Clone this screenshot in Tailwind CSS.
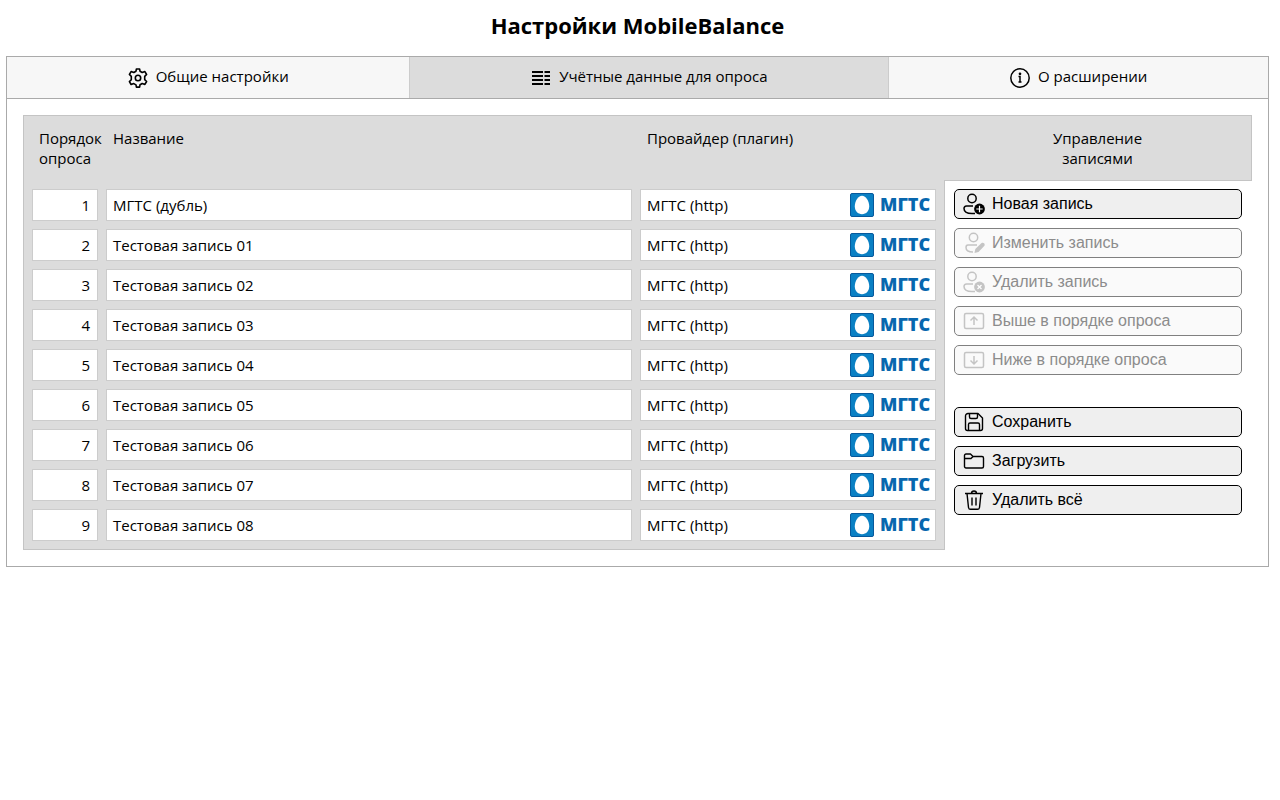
<!DOCTYPE html>
<html lang="ru">
<head>
    <meta charset="UTF-8">
    <meta name="viewport" content="width=device-width, initial-scale=1.0">
    <title>Настройки MobileBalance</title>
    <script src="https://cdn.jsdelivr.net/npm/@tailwindcss/browser@4"></script>
</head>

<body class="bg-white text-black font-['Open_Sans','Noto_Sans',sans-serif] text-[15px] leading-5 pl-1.5 pr-[11px]">
    <h1 class="h-14 pt-[9px] text-center text-[22px] leading-8 font-bold">Настройки MobileBalance</h1>

    <main class="border border-[#aaa]">
        <!-- Tabs -->
        <div role="tablist" class="flex h-[42px] border-b border-[#aaa] bg-[#f7f7f7]">
            <button type="button" role="tab" aria-selected="false" class="flex flex-auto items-center justify-center gap-2">
                <svg class="size-5" viewBox="0 0 20 20" fill="none" stroke="currentColor" stroke-width="1.6" stroke-linejoin="round">
                    <path d="M8 3.2 8.4 1h3.2l.4 2.2 2.2 1.3 2.7-.9 1.7 2.9-1.9 1.9v3.2l1.9 1.9-1.7 2.9-2.7-.9-2.2 1.3-.4 2.3H8.4L8 16.9l-2.2-1.3-2.7.9-1.7-2.9 1.9-1.9V8.4L1.4 6.5l1.7-2.9 2.7.9z"/>
                    <circle cx="10" cy="10" r="2.7"/>
                </svg>
                <span class="pb-[3px]">Общие настройки</span>
            </button>
            <button type="button" role="tab" aria-selected="true" class="flex flex-auto items-center justify-center gap-2 border-x border-[#ccc] bg-[#dcdcdc]">
                <svg class="size-5" viewBox="0 0 20 20" fill="currentColor">
                    <path d="M1 3h11v2H1zM1 7h11v2H1zM1 11h11v2H1zM1 15h11v2H1zM13.500 3h5.500v2h-5.500zM13.500 7h5.500v2h-5.500zM13.500 11h5.500v2h-5.500zM13.500 15h5.500v2h-5.500z"/>
                </svg>
                <span class="pb-[3px]">Учётные данные для опроса</span>
            </button>
            <button type="button" role="tab" aria-selected="false" class="flex flex-auto items-center justify-center gap-2">
                <svg class="size-5" viewBox="0 0 20 20" fill="none" stroke="currentColor" stroke-width="1.5">
                    <circle cx="10" cy="10" r="9.2"/>
                    <path d="M8.5 8.5H10V14M8.5 14h3"/>
                    <circle cx="10" cy="5.8" r=".6" fill="currentColor"/>
                </svg>
                <span class="pb-[3px]">О расширении</span>
            </button>
        </div>

        <section class="flex p-4">
            <!-- Accounts -->
            <div class="flex-1 border-y border-l border-[#c4c4c4] bg-[#dcdcdc]">
                <table class="w-full table-fixed border-separate border-spacing-2">
                    <colgroup>
                        <col class="w-[66px]">
                        <col>
                        <col class="w-[296px]">
                    </colgroup>
                    <thead>
                        <tr class="h-[57px] text-left align-top">
                            <th scope="col" class="pt-1 pl-[7px] font-normal">Порядок опроса</th>
                            <th scope="col" class="pt-1 pl-[7px] font-normal">Название</th>
                            <th scope="col" class="pt-1 pl-[7px] font-normal">Провайдер (плагин)</th>
                        </tr>
                    </thead>
                    <tbody id="accounts"></tbody>
                </table>
            </div>

            <!-- Account controls -->
            <div class="flex w-[308px] flex-col">
                <h2 class="h-[66px] border-y border-r border-[#c4c4c4] bg-[#dcdcdc] px-20 pt-3 text-center">Управление записями</h2>
                <div class="flex flex-1 flex-col gap-[9px] border-l border-[#c4c4c4] pt-2 pr-2.5 pl-[9px] font-['Liberation_Sans',Arial,sans-serif] text-base">
                    <button type="button" class="flex h-[30px] items-center gap-[7px] rounded-[5px] border border-black bg-[#efefef] px-2">
                        <svg class="size-[22px]" viewBox="0 0 22 22" fill="none" stroke="currentColor" stroke-width="1.5">
                            <circle cx="9" cy="5.5" r="4.2"/>
                            <path d="M10 13H3.5C1.8 13 1 14 1 15.5 1 18.5 4 20.5 9 20.5h3"/>
                            <circle cx="16.5" cy="16" r="5.4" fill="currentColor" stroke="none"/>
                            <path d="M16.5 12.8v6.4M13.3 16h6.4" stroke="#fff" stroke-width="1.2"/>
                        </svg>
                        <span>Новая запись</span>
                    </button>
                    <button type="button" disabled class="flex h-[30px] items-center gap-[7px] rounded-[5px] border border-[#808080] bg-[#fafafa] px-2 text-[#8c8c8c]">
                        <svg class="size-[22px] text-[#c4c4c4]" viewBox="0 0 22 22" fill="none" stroke="currentColor" stroke-width="1.5">
                            <circle cx="10.5" cy="5.5" r="4.2"/>
                            <path d="M14 13H5c-1.5 0-2 1-2 2.5 0 3 3 4.5 7 4.5"/>
                            <path d="M11.5 21l.8-4 6-5.8c2.2-1.5 4.4.8 2.9 2.9l-5.7 5.9z" fill="currentColor" stroke="none"/>
                        </svg>
                        <span>Изменить запись</span>
                    </button>
                    <button type="button" disabled class="flex h-[30px] items-center gap-[7px] rounded-[5px] border border-[#808080] bg-[#fafafa] px-2 text-[#8c8c8c]">
                        <svg class="size-[22px] text-[#c4c4c4]" viewBox="0 0 22 22" fill="none" stroke="currentColor" stroke-width="1.5">
                            <circle cx="9" cy="5.5" r="4.2"/>
                            <path d="M10 13H3.5C1.8 13 1 14 1 15.5 1 18.5 4 20.5 9 20.5h3"/>
                            <circle cx="16.5" cy="16" r="5.4" fill="currentColor" stroke="none"/>
                            <path d="M14.5 14l4 4M18.5 14l-4 4" stroke="#fff" stroke-width="1.2"/>
                        </svg>
                        <span>Удалить запись</span>
                    </button>
                    <button type="button" disabled class="flex h-[30px] items-center gap-[7px] rounded-[5px] border border-[#808080] bg-[#fafafa] px-2 text-[#8c8c8c]">
                        <svg class="size-[22px] text-[#c4c4c4]" viewBox="0 0 22 22" fill="none" stroke="currentColor" stroke-width="1.5">
                            <rect x="1.5" y="3.5" width="19" height="15" rx="1.5"/>
                            <path d="M11 15V7M7.5 10.5 11 7l3.5 3.5"/>
                        </svg>
                        <span>Выше в порядке опроса</span>
                    </button>
                    <button type="button" disabled class="flex h-[30px] items-center gap-[7px] rounded-[5px] border border-[#808080] bg-[#fafafa] px-2 text-[#8c8c8c]">
                        <svg class="size-[22px] text-[#c4c4c4]" viewBox="0 0 22 22" fill="none" stroke="currentColor" stroke-width="1.5">
                            <rect x="1.5" y="3.5" width="19" height="15" rx="1.5"/>
                            <path d="M11 7v8M7.5 11.5 11 15l3.5-3.5"/>
                        </svg>
                        <span>Ниже в порядке опроса</span>
                    </button>

                    <div class="mt-[23px] flex flex-col gap-[9px]">
                        <button type="button" class="flex h-[30px] items-center gap-[7px] rounded-[5px] border border-black bg-[#efefef] px-2">
                            <svg class="size-[22px]" viewBox="0 0 22 22" fill="none" stroke="currentColor" stroke-width="1.4" stroke-linejoin="round">
                                <path d="M5 2.5h10L19.5 7v10.5a2 2 0 0 1-2 2h-13a2 2 0 0 1-2-2V5A2.5 2.5 0 0 1 5 2.5z"/>
                                <path d="M6.5 2.5V6A1.5 1.5 0 0 0 8 7.5h5A1.5 1.5 0 0 0 14.5 6V2.5M5.5 19.5v-6A1.5 1.5 0 0 1 7 12h8a1.5 1.5 0 0 1 1.5 1.5v6"/>
                            </svg>
                            <span>Сохранить</span>
                        </button>
                        <button type="button" class="flex h-[30px] items-center gap-[7px] rounded-[5px] border border-black bg-[#efefef] px-2">
                            <svg class="size-[22px]" viewBox="0 0 22 22" fill="none" stroke="currentColor" stroke-width="1.4" stroke-linejoin="round">
                                <path d="M1.5 16.5v-11A1.5 1.5 0 0 1 3 4h4.5L10 6.5h9A1.5 1.5 0 0 1 20.5 8v8.5A1.5 1.5 0 0 1 19 18H3a1.5 1.5 0 0 1-1.5-1.5z"/>
                                <path d="M1.5 8.5H8l2-2"/>
                            </svg>
                            <span>Загрузить</span>
                        </button>
                        <button type="button" class="flex h-[30px] items-center gap-[7px] rounded-[5px] border border-black bg-[#efefef] px-2">
                            <svg class="size-[22px]" viewBox="0 0 22 22" fill="none" stroke="currentColor" stroke-width="1.4" stroke-linejoin="round">
                                <path d="M2 4.5h18M8.5 4.5a2.5 2.5 0 0 1 5 0M4 4.5l1.5 14a2 2 0 0 0 2 1.8h7a2 2 0 0 0 2-1.8L18 4.5M9 8.5v8M13 8.5v8"/>
                            </svg>
                            <span>Удалить всё</span>
                        </button>
                    </div>
                </div>
            </div>
        </section>
    </main>

    <template id="account-row">
        <tr class="h-8">
            <td class="border border-[#ccc] bg-white px-[7px] text-right"></td>
            <td class="border border-[#ccc] bg-white px-1.5"></td>
            <td class="border border-[#ccc] bg-white pr-[5px] pl-1.5">
                <div class="flex items-center justify-between">
                    <span>МГТС (http)</span>
                    <svg class="h-6 w-20" viewBox="0 0 80 24" role="img" aria-label="МГТС">
                        <rect x=".5" y=".5" width="23" height="23" rx="1.5" fill="#0a80c4" stroke="#07599c"/>
                        <path d="M12 2.8C8 2.8 4.8 8.5 4.8 13.3c0 4.7 3 7.9 7.2 7.9s7.2-3.2 7.2-7.9C19.2 8.5 16 2.8 12 2.8z" fill="#fff"/>
                        <text x="30" y="18" fill="#0867ae" class="font-['Open_Sans',sans-serif] text-[18px] font-extrabold">МГТС</text>
                    </svg>
                </div>
            </td>
        </tr>
    </template>

    <script>
        const names = ['МГТС (дубль)'];
        for (let i = 1; i <= 8; i++) {
            names.push('Тестовая запись 0' + i);
        }

        // Fill the accounts table in polling order
        const rowTemplate = document.getElementById('account-row');
        const accounts = document.getElementById('accounts');
        names.forEach((name, index) => {
            const row = rowTemplate.content.cloneNode(true);
            const cells = row.querySelectorAll('td');
            cells[0].textContent = index + 1;
            cells[1].textContent = name;
            accounts.appendChild(row);
        });
    </script>
</body>
</html>
